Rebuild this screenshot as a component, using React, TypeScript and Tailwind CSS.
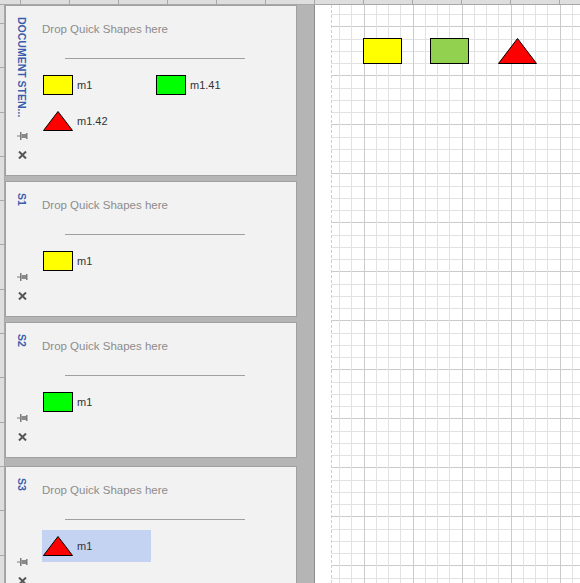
import React from 'react';

type Shape = 'yellow' | 'green' | 'triangle';

type Item = { shape: Shape; label: string; selected?: boolean };

const font = { fontFamily: '"Liberation Sans", Arial, sans-serif' };

function ShapeIcon({ shape }: { shape: Shape }) {
  if (shape === 'triangle') {
    return (
      <svg width="30" height="20" viewBox="0 0 30 20" className="shrink-0">
        <polygon points="15,0.5 29.5,19.5 0.5,19.5" fill="#ff0000" stroke="#000" strokeWidth="1" />
      </svg>
    );
  }
  return (
    <div
      className={`w-[30px] h-[20px] shrink-0 border border-black ${
        shape === 'yellow' ? 'bg-[#ffff00]' : 'bg-[#00ff00]'
      }`}
    />
  );
}

function PinIcon() {
  return (
    <svg width="11" height="8" viewBox="0 0 11 8" className="block">
      <rect x="0" y="3.5" width="3" height="1" fill="#7c7c7c" />
      <rect x="3" y="0" width="1.5" height="8" fill="#7c7c7c" />
      <rect x="4.5" y="2" width="4.5" height="4" fill="#8a8a8a" />
      <rect x="9" y="1" width="1.5" height="6" fill="#7c7c7c" />
    </svg>
  );
}

function CloseIcon() {
  return (
    <svg width="9" height="8" viewBox="0 0 9 8" className="block">
      <path d="M1 0.5 L8 7.5 M8 0.5 L1 7.5" stroke="#555" strokeWidth="2" />
    </svg>
  );
}

function Stencil({ title, items, h }: { title: string; items: Item[]; h: string }) {
  return (
    <div className={`flex shrink-0 w-[292px] ${h} bg-[#f2f2f2] border border-[#a0a0a0]`} style={font}>
      <div className="w-[32px] flex flex-col items-center pt-[11px] pb-[16px]">
        <div className="[writing-mode:vertical-rl] text-[10.5px] font-bold leading-none text-[#3a5cac] whitespace-nowrap">
          {title}
        </div>
        <div className="mt-auto mb-[11px]">
          <PinIcon />
        </div>
        <CloseIcon />
      </div>
      <div className="flex-1 pl-[4px] pt-[16px]">
        <div className="text-[11.5px] leading-[14px] text-[#8c8c8c]">Drop Quick Shapes here</div>
        <div className="ml-[23px] mt-[22px] w-[180px] h-px bg-[#a0a0a0]" />
        <div className="mt-[10px] grid grid-cols-[109px_109px] gap-x-[4px] gap-y-[4px]">
          {items.map((it, i) => (
            <div
              key={i}
              className={`h-[32px] flex items-center pl-[1px] ${it.selected ? 'bg-[#c5d3f2]' : ''}`}
            >
              <ShapeIcon shape={it.shape} />
              <span className="ml-[4px] pt-[1px] text-[11px] text-[#333]">{it.label}</span>
            </div>
          ))}
        </div>
      </div>
    </div>
  );
}

function CanvasGrid() {
  const vx = Array.from({ length: 20 }, (_, k) => Math.round(339 + 12.25 * k) - 315);
  const hy = Array.from({ length: 48 }, (_, k) => Math.round(14 + 12.25 * k) - 5);
  return (
    <svg className="absolute inset-0" width="265" height="578">
      {hy.map((y, k) => (
        <line
          key={'h' + k}
          x1="16"
          x2="265"
          y1={y + 0.5}
          y2={y + 0.5}
          stroke={k % 4 === 1 ? '#cbcbcb' : '#e2e2e2'}
        />
      ))}
      {vx.map((x, k) => (
        <line
          key={'v' + k}
          x1={x + 0.5}
          x2={x + 0.5}
          y1="0"
          y2="578"
          stroke={k % 4 === 2 ? '#cbcbcb' : '#e2e2e2'}
        />
      ))}
      <line x1="16.5" x2="16.5" y1="0" y2="578" stroke="#cfcfcf" strokeDasharray="3 2" />
    </svg>
  );
}

export default function App() {
  return (
    <div className="w-[580px] h-[583px] overflow-hidden flex flex-col bg-[#b5b5b5]">
      {/* top ruler */}
      <div className="h-[5px] shrink-0 bg-[#dedede] border-b border-[#a8a8a8] bg-[repeating-linear-gradient(to_right,transparent_0,transparent_20px,#a8a8a8_20px,#a8a8a8_21px,transparent_21px,transparent_49px)]" />
      <div className="flex flex-1 min-h-0">
        {/* left ruler */}
        <div className="w-[5px] shrink-0 bg-[#dedede] border-r border-[#a8a8a8] bg-[repeating-linear-gradient(to_bottom,transparent_0,transparent_18px,#a8a8a8_18px,#a8a8a8_19px,transparent_19px,transparent_44.3px)]" />
        {/* stencil pane */}
        <div className="w-[310px] shrink-0 flex flex-col border-r border-[#8c8c8c] bg-[#b5b5b5]">
          <Stencil
            title="DOCUMENT STEN..."
            h="h-[171px]"
            items={[
              { shape: 'yellow', label: 'm1' },
              { shape: 'green', label: 'm1.41' },
              { shape: 'triangle', label: 'm1.42' },
            ]}
          />
          <div className="mt-[5px]">
            <Stencil title="S1" h="h-[136px]" items={[{ shape: 'yellow', label: 'm1' }]} />
          </div>
          <div className="mt-[5px]">
            <Stencil title="S2" h="h-[136px]" items={[{ shape: 'green', label: 'm1' }]} />
          </div>
          <div className="mt-[8px]">
            <Stencil title="S3" h="h-[136px]" items={[{ shape: 'triangle', label: 'm1', selected: true }]} />
          </div>
        </div>
        {/* drawing canvas */}
        <div className="relative flex-1 bg-white overflow-hidden">
          <CanvasGrid />
          <div className="absolute left-[48px] top-[33px] w-[39px] h-[26px] border border-black bg-[#ffff00]" />
          <div className="absolute left-[115px] top-[33px] w-[39px] h-[26px] border border-black bg-[#92d050]" />
          <svg className="absolute left-[183px] top-[33px]" width="39" height="26" viewBox="0 0 39 26">
            <polygon points="19.5,0.5 38.5,25.5 0.5,25.5" fill="#ff0000" stroke="#000" strokeWidth="1" />
          </svg>
        </div>
      </div>
    </div>
  );
}
